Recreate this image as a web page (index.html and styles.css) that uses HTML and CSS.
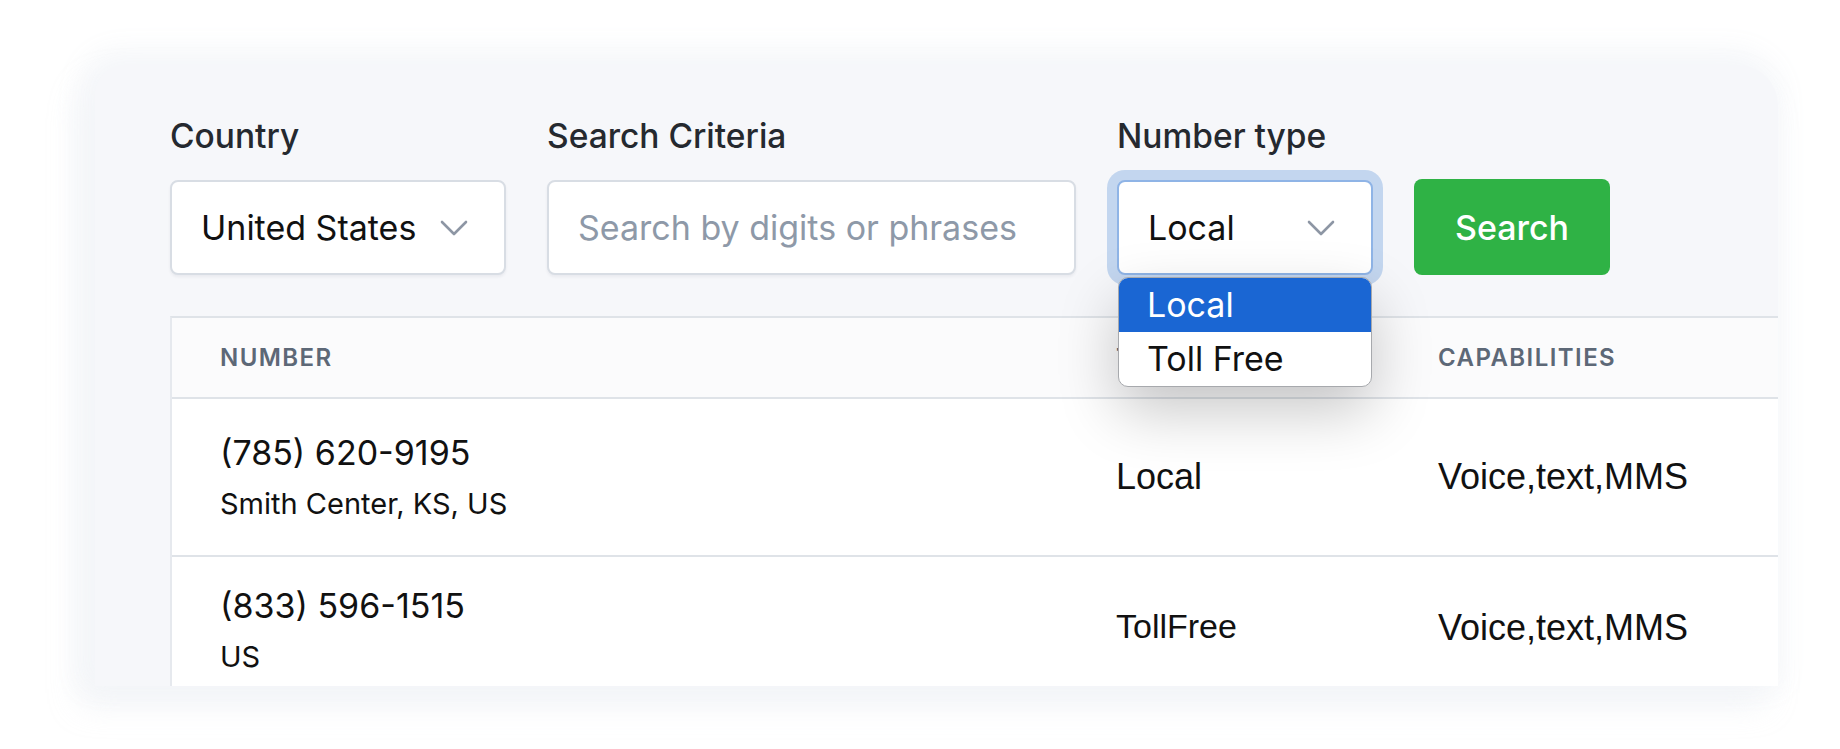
FILE: index.html
```html
<!DOCTYPE html>
<html lang="en">
<head>
<meta charset="utf-8">
<title>Number search</title>
<link rel="stylesheet" href="styles.css">
</head>
<body>
<div class="stage">
  <div class="panel">
    <form class="filters">
      <div class="field field--country">
        <label class="field-label">Country</label>
        <div class="control select">
          <span class="select-value">United States</span>
          <svg class="chevron" viewBox="0 0 28 16" width="28" height="16"><polyline points="2,2 14,14 26,2"/></svg>
        </div>
      </div>
      <div class="field field--criteria">
        <label class="field-label">Search Criteria</label>
        <div class="control input">
          <span class="placeholder">Search by digits or phrases</span>
        </div>
      </div>
      <div class="field field--type">
        <label class="field-label">Number type</label>
        <div class="control select select--focused">
          <span class="select-value">Local</span>
          <svg class="chevron" viewBox="0 0 28 16" width="28" height="16"><polyline points="2,2 14,14 26,2"/></svg>
          <ul class="menu">
            <li class="menu-item menu-item--active">Local</li>
            <li class="menu-item">Toll Free</li>
          </ul>
        </div>
      </div>
      <button type="button" class="btn-search">Search</button>
    </form>

    <div class="table">
      <div class="thead">
        <div class="th th--number">NUMBER</div>
        <div class="th th--type">TYPE</div>
        <div class="th th--caps">CAPABILITIES</div>
      </div>
      <div class="trow">
        <div class="td td--number">
          <div class="phone">(785) 620-9195</div>
          <div class="place">Smith Center, KS, US</div>
        </div>
        <div class="td td--type">Local</div>
        <div class="td td--caps">Voice,text,MMS</div>
      </div>
      <div class="trow trow--second">
        <div class="td td--number">
          <div class="phone">(833) 596-1515</div>
          <div class="place">US</div>
        </div>
        <div class="td td--type">TollFree</div>
        <div class="td td--caps">Voice,text,MMS</div>
      </div>
    </div>
  </div>
</div>
</body>
</html>
```

FILE: styles.css
```css
* { box-sizing: border-box; }

html, body {
  margin: 0;
  padding: 0;
  background: #ffffff;
  width: 1840px;
  height: 749px;
  overflow: hidden;
  font-family: Inter, "Noto Sans", sans-serif;
  color: #111111;
}

.stage {
  padding: 65px 62px 0 95px;
}

.panel {
  width: 1683px;
  height: 621px;
  background: #f6f7fa;
  border-radius: 30px 40px 0 0;
  box-shadow: -6px -6px 28px 8px rgba(243, 245, 249, 0.95),
              -14px 18px 32px 0 rgba(218, 223, 233, 0.35);
  padding: 51px 0 0 75px;
  overflow: hidden;
}

.filters {
  display: flex;
  align-items: flex-end;
  gap: 41px;
  margin: 0;
}

.field {
  display: flex;
  flex-direction: column;
}

.field--country { width: 336px; }
.field--criteria { width: 529px; }
.field--type { width: 256px; }

.field-label {
  font-size: 33.5px;
  font-weight: 500;
  line-height: 40px;
  color: #25292f;
  margin-bottom: 24px;
  white-space: nowrap;
}

.control {
  position: relative;
  height: 95px;
  background: #ffffff;
  border: 2px solid #d8dde4;
  border-radius: 8px;
  box-shadow: 0 2px 3px rgba(30, 40, 60, 0.06);
  display: flex;
  align-items: center;
  padding: 0 36px 0 29px;
  font-size: 34px;
  line-height: 40px;
}

.select {
  justify-content: space-between;
}

.select-value {
  color: #111111;
  white-space: nowrap;
}

.placeholder {
  color: #8e99a8;
  white-space: nowrap;
}

.chevron {
  flex: none;
  fill: none;
  stroke: #8d96a4;
  stroke-width: 2.6;
  stroke-linecap: round;
  stroke-linejoin: round;
}

.select--focused {
  border-color: #8fb4e6;
  box-shadow: 0 0 0 10px #c3d6ef;
}

.menu {
  position: absolute;
  left: -1px;
  right: -1px;
  top: calc(100% + 4px);
  margin: 0;
  padding: 0;
  list-style: none;
  background: #ffffff;
  border: 1px solid #a7a9ad;
  border-radius: 10px;
  overflow: hidden;
  box-shadow: 0 24px 60px rgba(0, 0, 0, 0.22);
  z-index: 5;
}

.menu-item {
  height: 54px;
  display: flex;
  align-items: center;
  padding-left: 28px;
  font-size: 34px;
  color: #111111;
}

.menu-item--active {
  background: #1a66d3;
  color: #ffffff;
}

.btn-search {
  width: 196px;
  height: 96px;
  border: none;
  border-radius: 8px;
  background: #2fb245;
  color: #ffffff;
  font-family: Inter, "Noto Sans", sans-serif;
  font-size: 34px;
  font-weight: 500;
  cursor: pointer;
}

.table {
  margin-top: 41px;
  width: 1640px;
  background: #ffffff;
  border-top: 2px solid #dfe3e8;
  border-left: 2px solid #e6e9ee;
}

.thead,
.trow {
  display: grid;
  grid-template-columns: 944px 322px 1fr;
}

.thead {
  height: 81px;
  background: #fbfbfc;
  border-bottom: 2px solid #dfe3e8;
  align-items: center;
}

.th {
  font-size: 24px;
  font-weight: 600;
  letter-spacing: 0.06em;
  color: #5d6877;
}

.th--number { padding-left: 48px; }

.trow {
  height: 158px;
  border-bottom: 2px solid #dfe3e8;
  align-items: center;
}

.trow--second {
  height: 150px;
  border-bottom: none;
  align-items: start;
  padding-top: 28px;
}

.td--number { padding-left: 48px; }

.phone {
  font-size: 34px;
  line-height: 42px;
  color: #111111;
}

.place {
  font-size: 29px;
  line-height: 36px;
  margin-top: 12px;
  color: #111111;
}

.td--type,
.td--caps {
  font-family: "Liberation Sans", Arial, sans-serif;
  font-size: 36px;
  color: #111111;
}

.trow--second .td--type {
  font-size: 34px;
}

.trow--second .td--type,
.trow--second .td--caps {
  padding-top: 22px;
}
```
